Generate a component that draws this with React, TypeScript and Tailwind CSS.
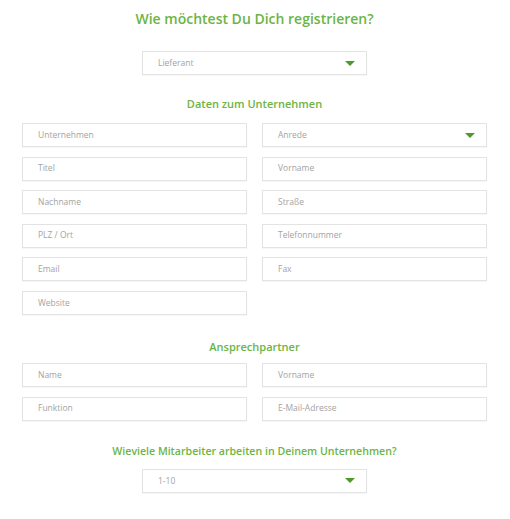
const firmFields: [string, boolean][] = [
    ['Unternehmen', false],
    ['Anrede', true],
    ['Titel', false],
    ['Vorname', false],
    ['Nachname', false],
    ['Straße', false],
    ['PLZ / Ort', false],
    ['Telefonnummer', false],
    ['Email', false],
    ['Fax', false],
    ['Website', false],
];

const contactFields = ['Name', 'Vorname', 'Funktion', 'E-Mail-Adresse'];

function Caret() {
    return (
        <svg width="10" height="5" viewBox="0 0 10 5" className="shrink-0">
            <path d="M0 0 L10 0 L5 5 Z" fill="#4c9a2a" />
        </svg>
    );
}

function Field({ label, select = false }: { label: string; select?: boolean }) {
    return (
        <div className="flex h-[24px] items-center justify-between border border-[#e3e3e3] bg-white pr-[11px] pl-[15px] shadow-[0_1px_1px_rgba(0,0,0,0.03)]">
            <span className="text-[8.5px] text-[#a3a3a3]">{label}</span>
            {select && <Caret />}
        </div>
    );
}

function Heading({ children, className }: { children: string; className: string }) {
    return (
        <h2 className={`text-center leading-[16px] font-semibold text-[#6cb444] ${className}`}>
            {children}
        </h2>
    );
}

export default function App() {
    return (
        <div className="min-h-[519px] bg-white px-[22px] pt-[9px] pr-[23px] font-['Open_Sans',sans-serif]">
            <h1 className="text-center text-[14px] leading-[20px] font-semibold text-[#6cb444]">
                Wie möchtest Du Dich registrieren?
            </h1>
            <div className="mx-auto mt-[22px] w-[225px]">
                <Field label="Lieferant" select />
            </div>

            <Heading className="mt-[21px] text-[11px]">Daten zum Unternehmen</Heading>
            <div className="mt-[11px] grid grid-cols-2 gap-x-[15px] gap-y-[9.6px]">
                {firmFields.map(([label, select], i) => (
                    <Field key={i} label={label} select={select} />
                ))}
            </div>

            <Heading className="mt-[24px] text-[11px]">Ansprechpartner</Heading>
            <div className="mt-[8px] grid grid-cols-2 gap-x-[15px] gap-y-[9.6px]">
                {contactFields.map((label) => (
                    <Field key={label} label={label} />
                ))}
            </div>

            <Heading className="mt-[22.4px] text-[10.6px]">
                Wieviele Mitarbeiter arbeiten in Deinem Unternehmen?
            </Heading>
            <div className="mx-auto mt-[10px] w-[225px]">
                <Field label="1-10" select />
            </div>
        </div>
    );
}
